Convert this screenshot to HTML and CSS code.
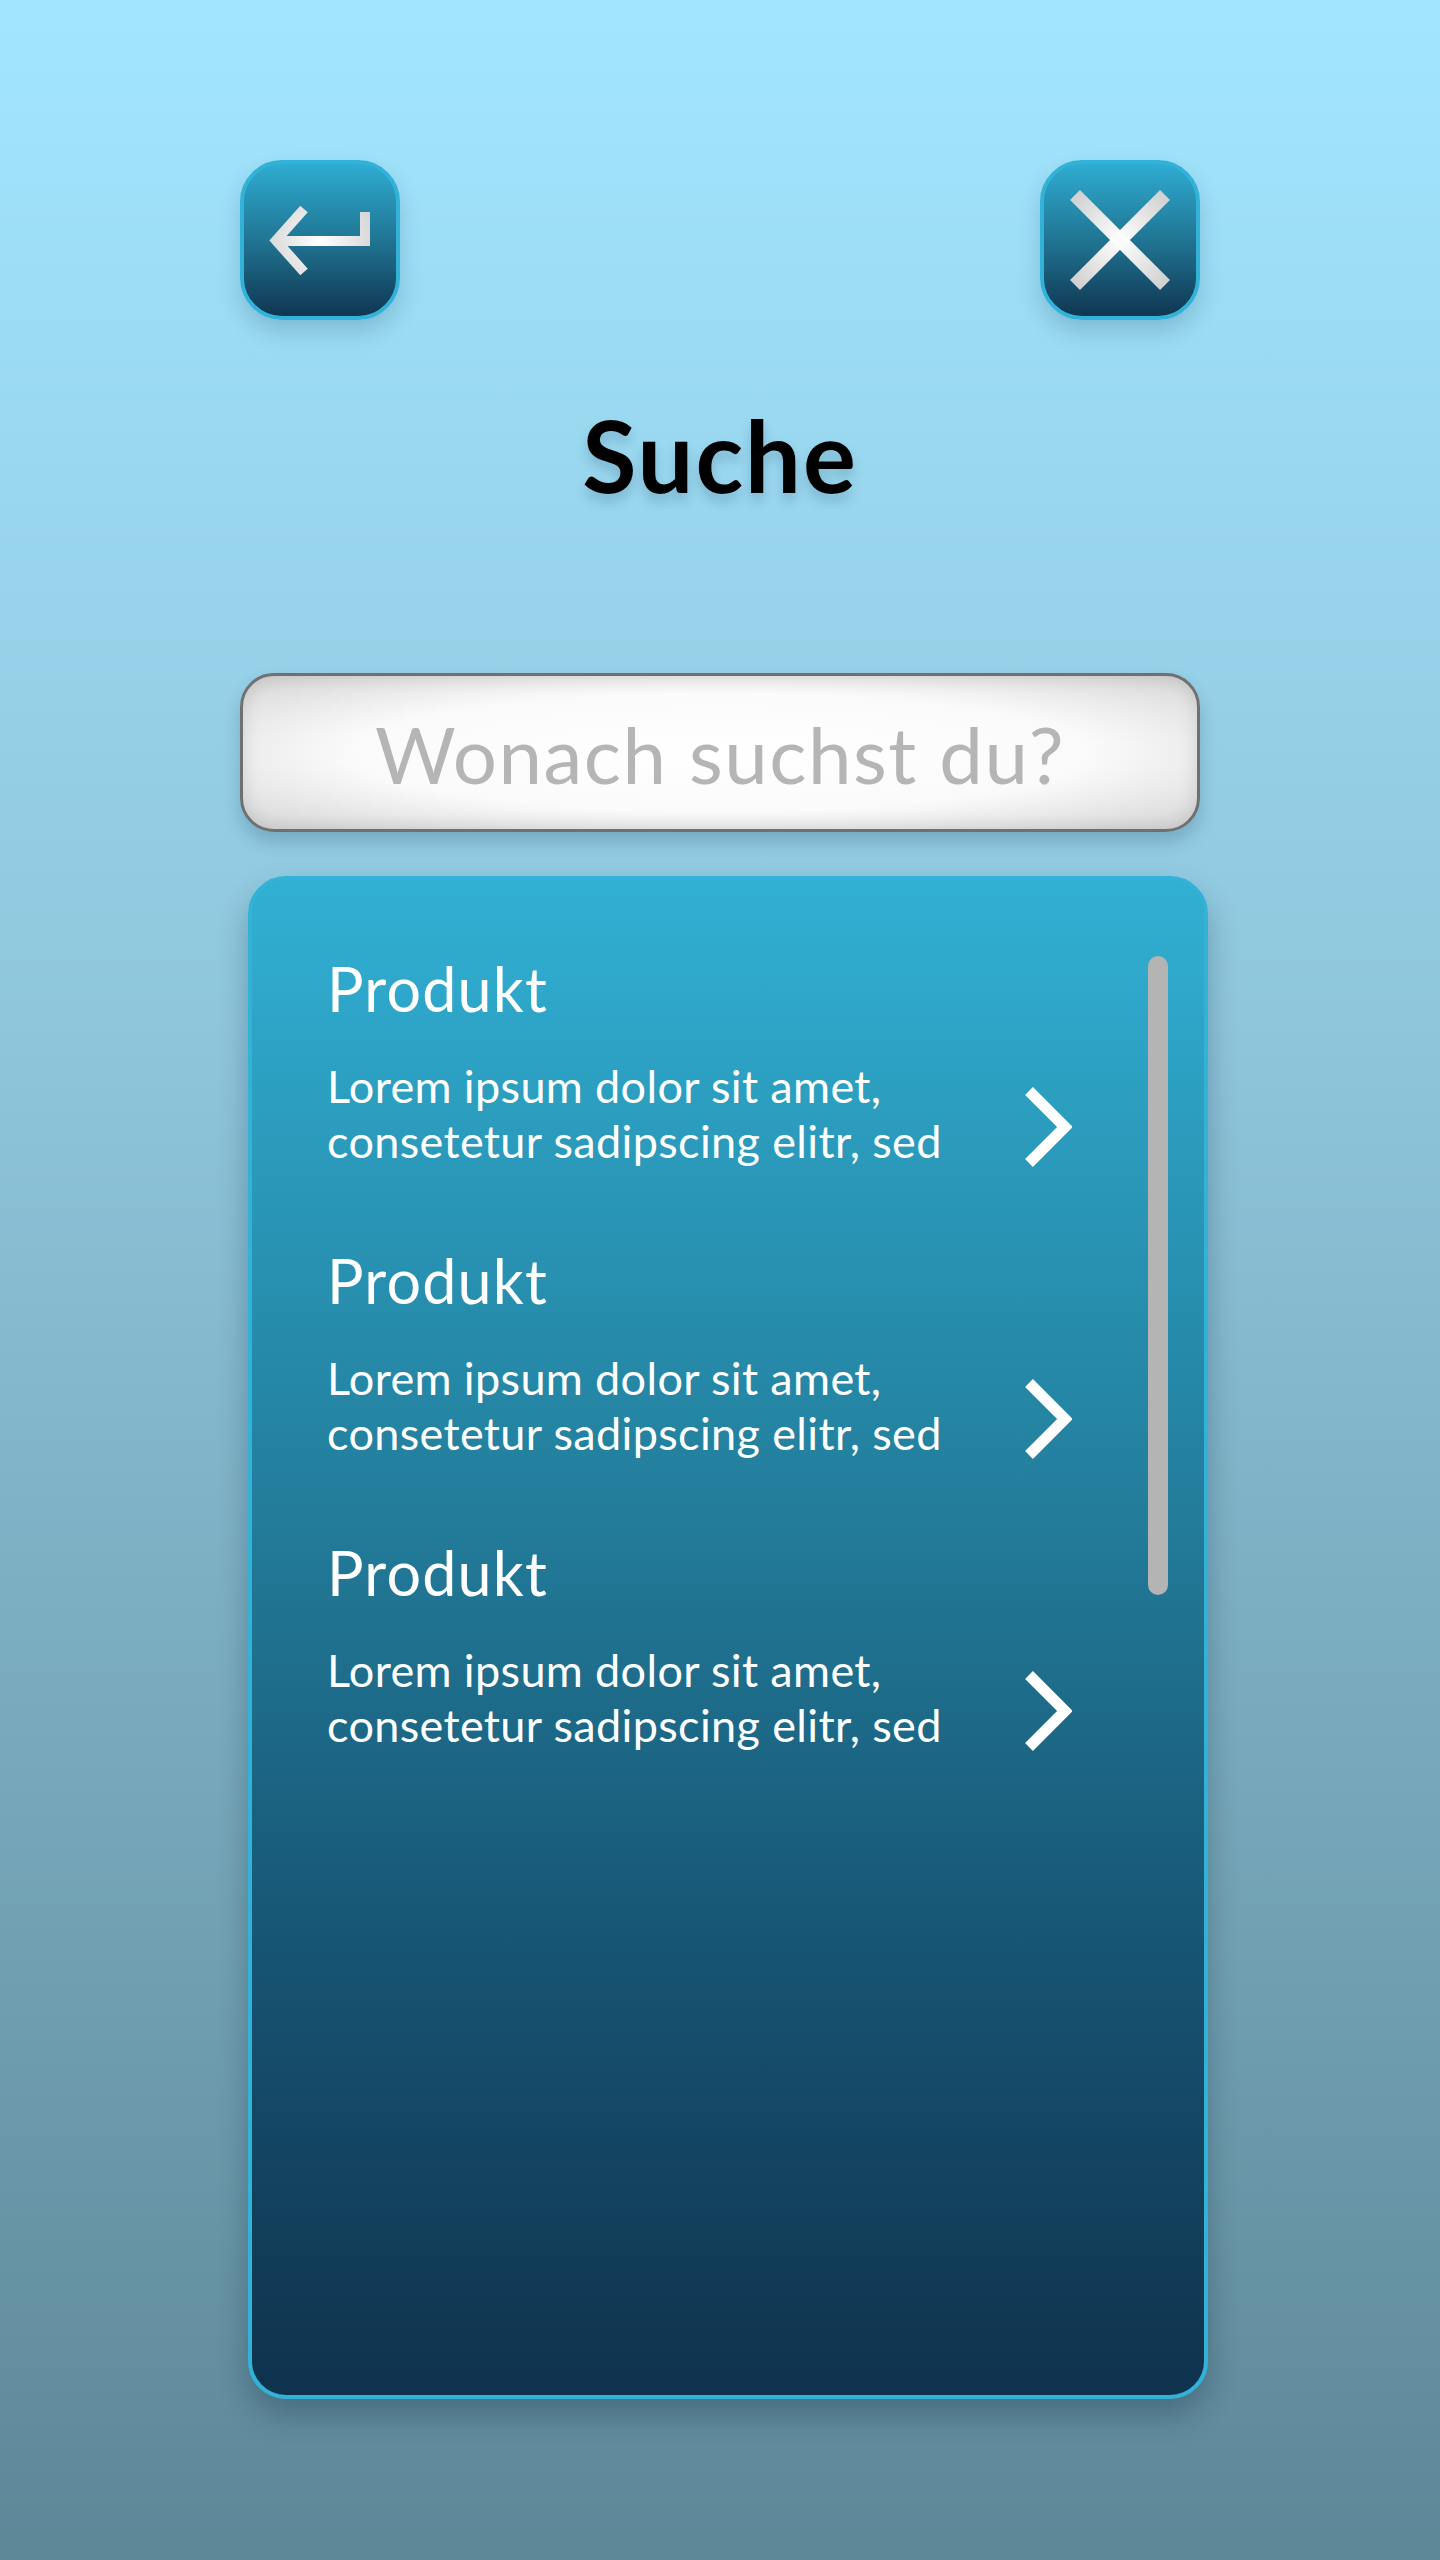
FILE: index.html
```html
<!DOCTYPE html>
<html lang="de">
<head>
<meta charset="utf-8">
<title>Suche</title>
<link rel="stylesheet" href="styles.css">
</head>
<body>
<div class="screen">
  <div class="topbar">
    <button class="icon-btn" aria-label="Zurück">
      <svg width="152" height="152" viewBox="4 4 152 152">
        <defs>
          <radialGradient id="g1" cx="80" cy="80" r="60" gradientUnits="userSpaceOnUse">
            <stop offset="0" stop-color="#ffffff"/>
            <stop offset="1" stop-color="#d2d2d2"/>
          </radialGradient>
        </defs>
        <polyline points="64,49 36,80.5 64,112" fill="none" stroke="url(#g1)" stroke-width="10" stroke-linejoin="miter"/>
        <polyline points="34,81 125,81 125,52" fill="none" stroke="url(#g1)" stroke-width="10" stroke-linejoin="miter"/>
      </svg>
    </button>
    <button class="icon-btn" aria-label="Schließen">
      <svg width="152" height="152" viewBox="4 4 152 152">
        <defs>
          <radialGradient id="g2" cx="80" cy="80" r="60" gradientUnits="userSpaceOnUse">
            <stop offset="0" stop-color="#ffffff"/>
            <stop offset="1" stop-color="#d2d2d2"/>
          </radialGradient>
        </defs>
        <line x1="35" y1="35" x2="125" y2="125" stroke="url(#g2)" stroke-width="14"/>
        <line x1="125" y1="35" x2="35" y2="125" stroke="url(#g2)" stroke-width="14"/>
      </svg>
    </button>
  </div>

  <h1 class="title">Suche</h1>

  <div class="search"><span class="placeholder">Wonach suchst du?</span></div>

  <div class="results">
    <div class="item">
      <div class="item-text">
        <div class="item-title">Produkt</div>
        <div class="item-desc">Lorem ipsum dolor sit amet,<br>consetetur sadipscing elitr, sed</div>
      </div>
      <svg class="chev" width="48" height="80" viewBox="0 0 48 80"><polyline points="5,4 41,40 5,76" fill="none" stroke="#fff" stroke-width="11"/></svg>
    </div>
    <div class="item">
      <div class="item-text">
        <div class="item-title">Produkt</div>
        <div class="item-desc">Lorem ipsum dolor sit amet,<br>consetetur sadipscing elitr, sed</div>
      </div>
      <svg class="chev" width="48" height="80" viewBox="0 0 48 80"><polyline points="5,4 41,40 5,76" fill="none" stroke="#fff" stroke-width="11"/></svg>
    </div>
    <div class="item">
      <div class="item-text">
        <div class="item-title">Produkt</div>
        <div class="item-desc">Lorem ipsum dolor sit amet,<br>consetetur sadipscing elitr, sed</div>
      </div>
      <svg class="chev" width="48" height="80" viewBox="0 0 48 80"><polyline points="5,4 41,40 5,76" fill="none" stroke="#fff" stroke-width="11"/></svg>
    </div>
    <div class="scrollbar"></div>
  </div>
</div>
</body>
</html>
```

FILE: styles.css
```css
html, body {
  margin: 0;
  padding: 0;
}
body {
  width: 1440px;
  height: 2560px;
  background: linear-gradient(to bottom, #a2e6ff 0%, #8fc6dc 40%, #5d8797 100%);
  font-family: Lato, "Open Sans", sans-serif;
}
.screen {
  width: 960px;
  margin: 0 auto;
  padding-top: 160px;
  display: flex;
  flex-direction: column;
}
.topbar {
  display: flex;
  justify-content: space-between;
}
.icon-btn {
  width: 160px;
  height: 160px;
  padding: 0;
  border: 4px solid #31b2d6;
  border-radius: 42px;
  background: linear-gradient(to bottom, #2eacd1 0%, #1f6f8d 55%, #103651 100%);
  box-shadow: 0 12px 22px rgba(0, 40, 70, 0.18);
  display: flex;
  align-items: center;
  justify-content: center;
  box-sizing: border-box;
}
.icon-btn svg {
  display: block;
}
.title {
  margin: 85px 0 0;
  font-size: 99px;
  line-height: 99px;
  font-weight: 700;
  letter-spacing: 2px;
  text-align: center;
  color: #000;
  text-shadow: 0 8px 12px rgba(0, 40, 70, 0.18);
}
.search {
  margin-top: 169px;
  height: 159px;
  box-sizing: border-box;
  border: 3px solid #707070;
  border-radius: 34px;
  background: radial-gradient(ellipse at center, #ffffff 0%, #fafafa 55%, #d4d4d4 100%);
  box-shadow: inset 0 0 18px rgba(0, 0, 0, 0.12), 0 10px 18px rgba(0, 40, 70, 0.2);
  display: flex;
  align-items: center;
  justify-content: center;
}
.placeholder {
  font-size: 78px;
  line-height: 1;
  letter-spacing: 1.5px;
  color: #b5b5b5;
  position: relative;
  top: 1px;
}
.results {
  position: relative;
  margin: 44px -8px 0 8px;
  height: 1523px;
  box-sizing: border-box;
  border: 4px solid #31b2d6;
  border-radius: 38px;
  background: linear-gradient(to bottom, #31b0d4 0%, #237f9d 40%, #175574 70%, #0f324d 100%);
  box-shadow: 0 16px 30px rgba(0, 30, 50, 0.28);
  padding: 79px 132px 0 75px;
  display: flex;
  flex-direction: column;
  gap: 82px;
}
.item {
  display: flex;
  justify-content: space-between;
}
.item-title {
  font-size: 61px;
  line-height: 60px;
  letter-spacing: 1.2px;
  color: #fff;
}
.item-desc {
  margin-top: 40px;
  font-size: 45px;
  line-height: 55px;
  letter-spacing: 0.35px;
  color: #fff;
}
.chev {
  align-self: flex-end;
  margin-bottom: 2px;
  display: block;
}
.scrollbar {
  position: absolute;
  top: 76px;
  right: 36px;
  width: 20px;
  height: 639px;
  border-radius: 10px;
  background: #b4b4b4;
}
```
